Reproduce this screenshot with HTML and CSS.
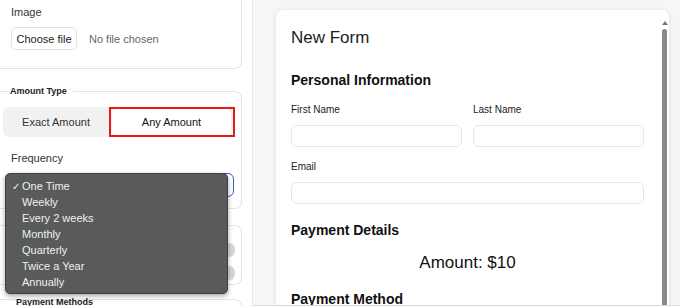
FILE: index.html
```html
<!DOCTYPE html>
<html>
<head>
<meta charset="utf-8">
<link rel="stylesheet" href="styles.css">
</head>
<body>
<div class="page">
  <aside class="side">
    <section class="card image-card">
      <div class="lbl">Image</div>
      <div class="file-row">
        <span class="file-btn">Choose file</span>
        <span class="file-none">No file chosen</span>
      </div>
    </section>

    <fieldset class="amount">
      <legend>Amount Type</legend>
      <div class="segment">
        <span class="seg">Exact Amount</span>
        <span class="seg-hl"><span class="seg active">Any Amount</span></span>
      </div>
      <div class="lbl freq">Frequency</div>
      <div class="select-wrap">
        <div class="select"></div>
        <ul class="dropdown">
          <li><span class="chk">✓</span>One Time</li>
          <li><span class="chk"></span>Weekly</li>
          <li><span class="chk"></span>Every 2 weeks</li>
          <li><span class="chk"></span>Monthly</li>
          <li><span class="chk"></span>Quarterly</li>
          <li><span class="chk"></span>Twice a Year</li>
          <li><span class="chk"></span>Annually</li>
        </ul>
      </div>
    </fieldset>

    <section class="card toggles">
      <div class="tog-row"><span class="knob"></span></div>
      <div class="tog-row"><span class="knob"></span></div>
    </section>

    <section class="card methods">
      <div class="methods-title">Payment Methods</div>
    </section>
  </aside>

  <main class="preview">
    <div class="form-card">
      <div class="form-body">
        <h1 class="title">New Form</h1>
        <h2 class="sec">Personal Information</h2>
        <div class="row">
          <div class="field">
            <label>First Name</label>
            <div class="input"></div>
          </div>
          <div class="field">
            <label>Last Name</label>
            <div class="input"></div>
          </div>
        </div>
        <div class="field email">
          <label>Email</label>
          <div class="input"></div>
        </div>
        <h2 class="sec pay">Payment Details</h2>
        <div class="amount-val">Amount: $10</div>
        <h2 class="sec method">Payment Method</h2>
      </div>
      <div class="scrollbar">
        <span class="arrow"></span>
        <span class="thumb"></span>
      </div>
    </div>
  </main>
</div>
</body>
</html>
```

FILE: styles.css
```css
* { box-sizing: border-box; }
html, body {
  margin: 0;
  padding: 0;
  width: 680px;
  height: 306px;
  overflow: hidden;
  background: #fff;
  font-family: "Liberation Sans", Arial, sans-serif;
}
.page {
  display: flex;
  height: 306px;
  overflow: hidden;
}
.side {
  width: 242px;
  height: 306px;
  margin-right: 10px;
  flex: none;
  display: flex;
  flex-direction: column;
  overflow: hidden;
}
.side > * { flex: none; }
.card {
  border: 1px solid #e4e4e4;
  border-left: none;
  border-radius: 0 7px 7px 0;
  background: #fff;
}
.image-card {
  border-top: none;
  height: 69px;
  padding: 5px 0 0 11px;
  border-radius: 0 0 7px 0;
}
.lbl {
  font-size: 11px;
  color: #333;
  line-height: 14px;
}
.file-row {
  display: flex;
  align-items: center;
  margin-top: 8px;
}
.file-btn {
  display: inline-flex;
  align-items: center;
  justify-content: center;
  width: 66px;
  height: 23px;
  border: 1px solid #e2e2e2;
  border-radius: 5px;
  font-size: 11px;
  color: #222;
}
.file-none {
  font-size: 11px;
  color: #666;
  margin-left: 12px;
}
.amount {
  margin: 16px 0 0 0;
  padding: 10px 6px 10px 3px;
  border: 1px solid #e4e4e4;
  border-left: none;
  border-radius: 0 7px 7px 0;
  min-width: 0;
  height: 124px;
}
.amount legend {
  font-size: 9px;
  font-weight: bold;
  color: #222;
  padding: 0 6px 0 0;
  margin-left: 7px;
  line-height: 12px;
}
.segment {
  display: flex;
  height: 30px;
  background: #f1f1f1;
  border-radius: 6px;
  width: 232px;
}
.seg {
  flex: 1;
  display: flex;
  align-items: center;
  justify-content: center;
  font-size: 11px;
  color: #333;
}
.seg-hl {
  flex: none;
  width: 126px;
  display: flex;
  border: 2px solid #e41b1b;
  padding: 0 2px 0 1px;
}
.seg.active {
  background: #fff;
  border-radius: 4px;
  color: #111;
}
.freq {
  margin: 14px 0 0 8px;
}
.select-wrap {
  position: relative;
  margin: 8px 0 0 4px;
}
.select {
  height: 24px;
  width: 227px;
  border: 1.5px solid #3a5cbf;
  border-radius: 6px;
}
.dropdown {
  position: absolute;
  left: -2px;
  top: 0;
  width: 223px;
  margin: 0;
  padding: 4px 0 3px 0;
  list-style: none;
  background: #595a5a;
  border: 1px solid #3e3e3e;
  border-radius: 5px;
  box-shadow: 0 2px 5px rgba(0,0,0,0.35);
  z-index: 3;
}
.dropdown li {
  display: flex;
  align-items: center;
  height: 16px;
  font-size: 11px;
  color: #f0f0f0;
  padding-left: 6px;
}
.chk {
  width: 10px;
  font-size: 10px;
}
.toggles {
  margin-top: 16px;
  height: 60px;
  padding: 17px 6px 0 0;
  display: flex;
  flex-direction: column;
  align-items: flex-end;
  gap: 9px;
}
.tog-row { height: 14px; }
.knob {
  display: block;
  width: 12px;
  height: 14px;
  border-radius: 7px;
  background: #d6d6d6;
}
.methods {
  margin-top: 14px;
  height: 20px;
  border-bottom: none;
  border-radius: 0 7px 0 0;
  padding: 0 0 0 16px;
}
.methods-title {
  font-size: 9px;
  font-weight: bold;
  color: #222;
  margin-top: -3px;
}
.preview {
  flex: 1;
  background: #f6f6f6;
  border-left: 1px solid #e6e6e6;
  border-bottom: 1px solid #dedede;
  padding: 9px 10px 0 22px;
  display: flex;
}
.form-card {
  flex: 1;
  background: #fff;
  border: 1px solid #ececec;
  border-bottom: none;
  border-radius: 8px 8px 0 0;
  box-shadow: 0 1px 4px rgba(0,0,0,0.06);
  display: flex;
  overflow: hidden;
}
.form-body {
  flex: 1;
  padding: 0 17px 0 15px;
}
.title {
  font-size: 17px;
  font-weight: normal;
  color: #1c1c1c;
  margin: 18px 0 0 0;
  line-height: 20px;
}
.sec {
  font-size: 14px;
  font-weight: bold;
  color: #111;
  margin: 0;
  line-height: 18px;
}
.title + .sec { margin-top: 23px; }
.row {
  display: flex;
  gap: 11px;
  margin-top: 15px;
}
.field { flex: 1; display: flex; flex-direction: column; }
.field label {
  font-size: 10px;
  color: #222;
  line-height: 12px;
}
.input {
  margin-top: 9px;
  height: 22px;
  border: 1px solid #e6e6e6;
  border-radius: 6px;
}
.email { margin-top: 14px; }
.pay { margin-top: 17px; }
.amount-val {
  text-align: center;
  font-size: 17px;
  color: #111;
  margin-top: 14px;
  line-height: 20px;
}
.method { margin-top: 17px; }
.scrollbar {
  width: 7px;
  flex: none;
  display: flex;
  flex-direction: column;
  align-items: center;
  padding-top: 11px;
  margin-right: 1px;
}
.arrow {
  width: 0;
  height: 0;
  border-left: 3px solid transparent;
  border-right: 3px solid transparent;
  border-bottom: 4px solid #777;
}
.thumb {
  margin-top: 4px;
  flex: 1;
  width: 5px;
  background: #8a8a8a;
  border-radius: 3px 3px 0 0;
}
```
